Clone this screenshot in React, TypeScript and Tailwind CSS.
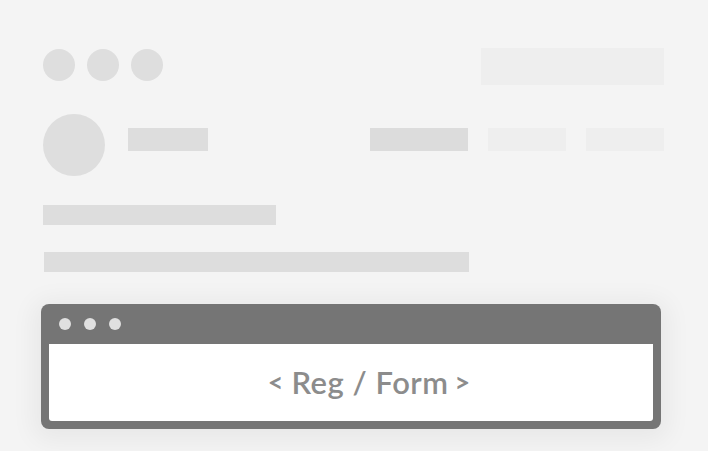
export default function App() {
  return (
    <div
      className="w-[708px] h-[451px] overflow-hidden bg-[#f4f4f4] pl-[43px] pr-[44px] pt-[48px]"
      style={{ fontFamily: 'Lato, "Open Sans", sans-serif' }}
    >
      {/* top row: dots + search placeholder */}
      <div className="flex items-start justify-between">
        <div className="flex gap-[12px] mt-px">
          <div className="w-[32px] h-[32px] rounded-full bg-[#dedede]" />
          <div className="w-[32px] h-[32px] rounded-full bg-[#dedede]" />
          <div className="w-[32px] h-[32px] rounded-full bg-[#dedede]" />
        </div>
        <div className="w-[183px] h-[37px] bg-[#eeeeee]" />
      </div>

      {/* profile row */}
      <div className="flex items-start mt-[29px]">
        <div className="w-[62px] h-[62px] rounded-full bg-[#dedede]" />
        <div className="w-[80px] h-[23px] mt-[14px] ml-[23px] bg-[#dddddd]" />
        <div className="ml-auto flex gap-[20px] mt-[14px]">
          <div className="w-[98px] h-[23px] bg-[#dcdcdc]" />
          <div className="w-[78px] h-[23px] bg-[#eeeeee]" />
          <div className="w-[78px] h-[23px] bg-[#eeeeee]" />
        </div>
      </div>

      {/* text lines */}
      <div className="mt-[29px] w-[233px] h-[20px] bg-[#dddddd]" />
      <div className="mt-[27px] ml-px w-[425px] h-[20px] bg-[#dddddd]" />

      {/* browser window */}
      <div className="mt-[32px] -ml-[2px] w-[620px] h-[125px] rounded-[8px] bg-[#757575] px-[8px] pb-[8px] flex flex-col shadow-[0_4px_24px_8px_rgba(0,0,0,0.05)]">
        <div className="h-[40px] flex items-center gap-[13px] pl-[10px] pb-px">
          <div className="w-[12px] h-[12px] rounded-full bg-[#e0e0e0]" />
          <div className="w-[12px] h-[12px] rounded-full bg-[#e0e0e0]" />
          <div className="w-[12px] h-[12px] rounded-full bg-[#e0e0e0]" />
        </div>
        <div className="flex-1 bg-white rounded-b-[3px] flex items-center justify-center pl-[36px]">
          <div className="flex items-center text-[#8c8c8c] font-semibold leading-none">
            <span className="text-[27px] font-bold -mt-[2px]">&lt;</span>
            <span className="text-[31px] tracking-[0.5px] ml-[8px] mr-[6px]">Reg / Form</span>
            <span className="text-[27px] font-bold -mt-[2px]">&gt;</span>
          </div>
        </div>
      </div>
    </div>
  );
}
